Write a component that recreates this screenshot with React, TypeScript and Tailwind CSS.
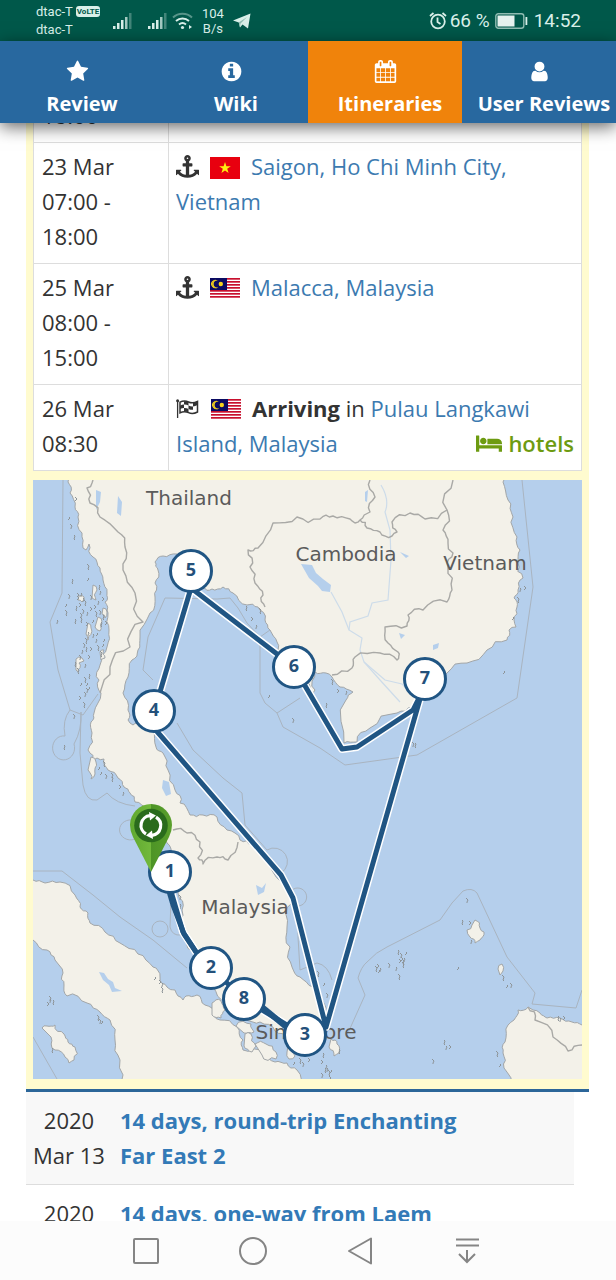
import type { ReactNode } from "react";

type Point = [number, number];

/* ---------- icons ---------- */

function Glyph({ d, box = "0 0 1792 1792", className }: { d: string; box?: string; className: string }) {
  return (
    <svg viewBox={box} className={className} fill="currentColor" aria-hidden="true">
      <path d={d} />
    </svg>
  );
}

const STAR =
  "M1728 647q0 22-26 48l-363 354 86 500q1 7 1 20 0 21-10.5 35.5t-30.5 14.5q-19 0-40-12l-449-236-449 236q-22 12-40 12-21 0-31.5-14.5t-10.5-35.5q0-6 2-20l86-500-364-354q-25-27-25-48 0-37 56-46l502-73 225-455q19-41 49-41t49 41l225 455 502 73q56 9 56 46z";
const INFO =
  "M1152 1376v-160q0-14-9-23t-23-9h-96v-512q0-14-9-23t-23-9h-320q-14 0-23 9t-9 23v160q0 14 9 23t23 9h96v320h-96q-14 0-23 9t-9 23v160q0 14 9 23t23 9h448q14 0 23-9t9-23zm-128-896v-160q0-14-9-23t-23-9h-192q-14 0-23 9t-9 23v160q0 14 9 23t23 9h192q14 0 23-9t9-23zm640 416q0 209-103 385.5t-279.5 279.5-385.5 103-385.5-103-279.5-279.5-103-385.5 103-385.5 279.5-279.5 385.5-103 385.5 103 279.5 279.5 103 385.5z";
const CALENDAR =
  "M192 1664h288v-288h-288v288zM544 1664h320v-288h-320v288zM192 1312h288v-320h-288v320zM544 1312h320v-320h-320v320zM192 928h288v-288h-288v288zM928 1664h320v-288h-320v288zM544 928h320v-288h-320v288zM1312 1664h288v-288h-288v288zM928 1312h320v-320h-320v320zM576 448v-288q0-13-9.5-22.5t-22.5-9.5h-64q-13 0-22.5 9.5t-9.5 22.5v288q0 13 9.5 22.5t22.5 9.5h64q13 0 22.5-9.5t9.5-22.5zM1312 1312h288v-320h-288v320zM928 928h320v-288h-320v288zM1312 928h288v-288h-288v288zM1344 448v-288q0-13-9.5-22.5t-22.5-9.5h-64q-13 0-22.5 9.5t-9.5 22.5v288q0 13 9.5 22.5t22.5 9.5h64q13 0 22.5-9.5t9.5-22.5zM1728 384v1280q0 52-38 90t-90 38h-1408q-52 0-90-38t-38-90v-1280q0-52 38-90t90-38h128v-96q0-66 47-113t113-47h64q66 0 113 47t47 113v96h384v-96q0-66 47-113t113-47h64q66 0 113 47t47 113v96h128q52 0 90 38t38 90z";
const USER =
  "M1536 1399q0 109-62.5 187t-150.5 78h-854q-88 0-150.5-78t-62.5-187q0-85 8.5-160.5t31.5-152 58.5-131 94-89 134.5-34.5q131 128 313 128t313-128q76 0 134.5 34.5t94 89 58.5 131 31.5 152 8.5 160.5zm-256-887q0 159-112.5 271.5t-271.5 112.5-271.5-112.5-112.5-271.5 112.5-271.5 271.5-112.5 271.5 112.5 112.5 271.5z";
const ANCHOR =
  "M960 256q0-26-19-45t-45-19-45 19-19 45 19 45 45 19 45-19 19-45zm832 928v352q0 22-20 30-8 2-12 2-12 0-23-9l-93-93q-119 143-318.5 226.5t-429.5 83.5-429.5-83.5-318.5-226.5l-93 93q-9 9-23 9-4 0-12-2-20-8-20-30v-352q0-14 9-23t23-9h352q22 0 30 20 8 19-7 35l-100 100q67 91 189.5 153.5t271.5 82.5v-647h-192q-26 0-45-19t-19-45v-128q0-26 19-45t45-19h192v-163q-58-34-93-92.5t-35-128.5q0-106 75-181t181-75 181 75 75 181q0 70-35 128.5t-93 92.5v163h192q26 0 45 19t19 45v128q0 26-19 45t-45 19h-192v647q149-20 271.5-82.5t189.5-153.5l-100-100q-15-16-7-35 8-20 30-20h352q14 0 23 9t9 23z";
const BED =
  "M256 1024h1728q26 0 45 19t19 45v448h-256v-256h-1536v256h-256v-1216q0-26 19-45t45-19h128q26 0 45 19t19 45v704zm576-320q0-106-75-181t-181-75-181 75-75 181 75 181 181 75 181-75 75-181zm1216 256v-64q0-159-112.5-271.5t-271.5-112.5h-704q-26 0-45 19t-19 45v384h1152z";

function AnchorIcon() {
  return <Glyph d={ANCHOR} className="mr-[11px] inline-block size-[23px] align-[-3px] text-[#333]" />;
}

function CheckeredFlagIcon() {
  return (
    <svg viewBox="0 0 23 19" className="mr-[12px] inline-block h-[19px] w-[23px] align-[-1px] text-[#333]" aria-hidden="true">
      <circle cx="1.600" cy="1.800" r="1.500" fill="currentColor" />
      <path d="M1.600 2v17" stroke="currentColor" strokeWidth="1.300" />
      <path d="M4 3.200c3-1.600 5.500-1.600 8.500-.2s5.500 1.200 9-.6v10.600c-3.500 1.800-6 2-9 .6s-5.500-1.400-8.500.2z" fill="#fff" stroke="currentColor" strokeWidth="1.500" />
      <path
        fill="currentColor"
        d="M8 2.200c1.700-.1 3 .3 4.500 1v3.400c-1.500-.8-2.800-1.100-4.500-1zM17 4c1.600 0 3-.6 4.500-1.400v3.500c-1.500.8-2.900 1.400-4.500 1.400zM12.500 6.600c1.500.8 3 1 4.500.9v3.300c-1.500.1-3-.2-4.500-.9zM4 6.700c1.300-.7 2.600-1.100 4-1.100V9c-1.400.1-2.700.5-4 1.100zM8 9c1.700-.1 3 .2 4.500.9v3.500c-1.500-.7-2.800-1-4.500-1z"
      />
    </svg>
  );
}

function VietnamFlag() {
  return (
    <svg viewBox="0 0 30 22" className="mr-[11px] inline-block h-[22px] w-[30px] align-[-4px]" aria-label="Vietnam flag">
      <rect width="30" height="22" fill="#e8000f" />
      <path fill="#ffee10" d="M15 5l1.400 4.200h4.400l-3.600 2.600 1.400 4.200-3.600-2.600-3.600 2.600 1.400-4.200-3.600-2.600h4.400z" />
    </svg>
  );
}

function MalaysiaFlag() {
  return (
    <svg viewBox="0 0 30 21" className="mr-[11px] inline-block h-[21px] w-[30px] align-[-3px]" aria-label="Malaysia flag">
      <rect width="30" height="21" fill="#fff" />
      {[0, 3, 6, 9, 12, 15, 18].map((y) => (
        <rect key={y} y={y} width="30" height="1.700" fill="#c8102e" />
      ))}
      <rect width="17" height="12" fill="#0a0a62" />
      <path d="M7.500 2.600a3.700 3.700 0 1 0 0 6.800a4.100 4.100 0 1 1 0-6.800z" fill="#f5d21c" />
      <path d="M6.800 2.200a4 4 0 1 0 1.600 7.200a3.600 3.600 0 1 1 0-6.800z" fill="#f5d21c" />
      <circle cx="10.800" cy="6" r="2.200" fill="#f5d21c" />
    </svg>
  );
}

/* ---------- system bars ---------- */

function Signal() {
  return (
    <svg viewBox="0 0 19 18" className="h-[18px] w-[19px]" fill="#d9efe9" aria-hidden="true">
      <rect x="0" y="14" width="2.500" height="3" />
      <rect x="4" y="11" width="2.500" height="6" />
      <rect x="8" y="8" width="2.500" height="9" />
      <rect x="12" y="5" width="2.500" height="12" opacity=".75" />
      <rect x="16" y="1" width="2.500" height="16" opacity=".3" />
    </svg>
  );
}

function StatusBar() {
  return (
    <header className="flex h-[41px] shrink-0 items-center justify-between bg-[#00584a] pr-[35px] pl-[36px] font-['Roboto',sans-serif] text-[#d9efe9]">
      <div className="flex items-center">
        <div className="w-[77px] text-[13px] leading-[18px]">
          <div className="flex items-center gap-[3px]">
            dtac-T
            <span className="rounded-[3px] bg-[#d9efe9] px-px text-[8px] leading-[11px] font-bold text-[#00584a]">VoLTE</span>
          </div>
          <div>dtac-T</div>
        </div>
        <div className="flex items-center gap-4">
          <Signal />
          <Signal />
        </div>
        <svg viewBox="0 0 22 18" className="ml-[5px] h-[18px] w-[22px]" fill="none" strokeWidth="2" aria-hidden="true">
          <path d="M1 5.500a14 14 0 0 1 19 0" stroke="#d9efe9" opacity=".4" />
          <path d="M4 9a10 10 0 0 1 13 0" stroke="#d9efe9" />
          <path d="M7 12.500a5.500 5.500 0 0 1 7 0" stroke="#d9efe9" />
          <circle cx="10.500" cy="15.500" r="1.600" fill="#d9efe9" />
          <path d="M17 13v4l3-2z" fill="#d9efe9" />
        </svg>
        <div className="ml-2 text-center text-[13px] leading-[15px]">
          104
          <br />
          B/s
        </div>
        <svg viewBox="0 0 18 16" className="ml-[9px] h-4 w-[18px]" fill="#d9efe9" aria-hidden="true">
          <path d="M0 7.500 17.500.500 15 15.500 9.500 11.500 7 14.500 5.800 9.500z" />
          <path d="M5.800 9.500 14 4 7.500 10.500 7 14.500z" fill="#8fbcb2" />
        </svg>
      </div>
      <div className="flex items-center text-[19px] leading-6">
        <svg viewBox="0 0 18 18" className="mr-[3px] size-[18px]" fill="none" stroke="#d9efe9" strokeWidth="1.800" aria-hidden="true">
          <circle cx="9" cy="9.500" r="6.800" />
          <path d="M8.500 5.500v4.500l3 2M1 4l3.500-3M17 4l-3.500-3" />
        </svg>
        66 %
        <svg viewBox="0 0 33 16" className="mr-[6px] ml-[5px] h-4 w-[33px]" aria-hidden="true">
          <rect x=".8" y=".8" width="28" height="14.400" rx="2.500" fill="none" stroke="#8fbcb2" strokeWidth="1.400" />
          <rect x="2.500" y="2.500" width="17" height="11" fill="#e6f2ef" />
          <rect x="30.500" y="4" width="1.800" height="8" fill="#d9efe9" />
        </svg>
        14:52
      </div>
    </header>
  );
}

const TABS = [
  { label: "Review", icon: STAR, active: false },
  { label: "Wiki", icon: INFO, active: false },
  { label: "Itineraries", icon: CALENDAR, active: true },
  { label: "User Reviews", icon: USER, active: false },
];

function TabBar() {
  return (
    <nav className="relative z-10 grid h-[82px] shrink-0 grid-cols-4 bg-[#28689f] font-bold text-white shadow-[0_4px_16px_rgba(0,0,0,0.6)]">
      {TABS.map((tab) => (
        <a
          key={tab.label}
          href="#"
          className={`flex flex-col items-center gap-[7px] pt-[19px] text-[20px] leading-[28px] whitespace-nowrap ${tab.active ? "bg-[#f0830b]" : ""}`}
        >
          <Glyph d={tab.icon} className="size-[23px]" />
          <span className="pl-[10px]">{tab.label}</span>
        </a>
      ))}
    </nav>
  );
}

function SystemNav() {
  const button = "flex size-9 items-center justify-center";
  const svg = "size-7 fill-none stroke-[#858585] stroke-2";
  return (
    <footer className="flex h-[59px] shrink-0 items-center justify-center gap-[71px] bg-[#fcfcfc] pr-[3px]">
      <button className={button} aria-label="Recent apps">
        <svg viewBox="0 0 28 28" className={svg}><rect x="2" y="2" width="24" height="24" rx="1" /></svg>
      </button>
      <button className={button} aria-label="Home">
        <svg viewBox="0 0 28 28" className={svg}><circle cx="14" cy="14" r="13" /></svg>
      </button>
      <button className={button} aria-label="Back">
        <svg viewBox="0 0 28 28" className={svg} strokeLinejoin="round"><path d="M25 1.500v25L3 14z" /></svg>
      </button>
      <button className={button} aria-label="Hide bar">
        <svg viewBox="0 0 28 28" className={svg}><path d="M3 2.500h23M3 8.500h23M14 13v12M6 17l8 8 8-8" /></svg>
      </button>
    </footer>
  );
}

/* ---------- map ---------- */

/* Splits every segment and nudges the new points sideways, so that a coarse outline reads as a natural coast. */
function coast(points: Point[], amount: number, closed = false): string {
  let seed = points.length * 7 + Math.round(points[0][0]);
  const next = () => {
    seed = (seed * 16807) % 2147483647;
    return seed / 2147483647 - 0.5;
  };
  let line = points;
  for (let pass = 0; pass < 2; pass++) {
    const out: Point[] = [];
    line.forEach((p, i) => {
      out.push(p);
      const q = line[i + 1];
      if (!q) return;
      const len = Math.hypot(q[0] - p[0], q[1] - p[1]);
      if (len < 4 || len > 60) return;
      const shift = next() * len * amount;
      out.push([
        (p[0] + q[0]) / 2 - ((q[1] - p[1]) / len) * shift,
        (p[1] + q[1]) / 2 + ((q[0] - p[0]) / len) * shift,
      ]);
    });
    line = out;
  }
  return "M" + line.map(([x, y]) => `${x.toFixed(1)} ${y.toFixed(1)}`).join("L") + (closed ? "Z" : "");
}

const MAINLAND: Point[] = [
  [68, 470], [68, 482], [70, 493], [75, 507], [78, 517], [82, 533], [83, 548], [86, 550], [89, 544], [93, 557], [100, 568], [103, 580], [107, 593], [105, 602],
  [108, 613], [109, 630], [107, 647], [100, 665], [99, 680], [101, 693], [94, 713], [91, 722], [92, 733], [88, 750], [93, 763], [97, 758], [104, 759], [108, 770], [118, 778],
  [124, 787], [130, 793], [135, 802], [147, 810], [155, 822], [160, 832], [167, 843], [171, 854], [176, 872], [178, 893], [182, 910], [184, 930], [193, 952], [213, 987], [227, 1000],
  [233, 1015], [246, 1020], [260, 1022], [275, 1031], [287, 1040], [300, 1051], [312, 1046], [324, 1036], [326, 1025], [325, 1012], [320, 998], [313, 987], [300, 977], [292, 967], [290, 947],
  [287, 927], [292, 903], [283, 883], [263, 857], [252, 845], [240, 840], [227, 830], [217, 817], [203, 815], [190, 815], [180, 803], [175, 790], [168, 770], [163, 753],
  [156, 747], [153, 730], [143, 723], [133, 725], [128, 720], [128, 710], [123, 693], [128, 677], [132, 660], [138, 650], [140, 637], [150, 613], [155, 597], [155, 583],
  [158, 570], [155, 562], [163, 556], [177, 554], [185, 560], [190, 588], [202, 588], [212, 589], [223, 587], [233, 593], [247, 605], [258, 607], [265, 620], [270, 630],
  [277, 642], [280, 657], [292, 668], [303, 678], [310, 687], [313, 693], [315, 690], [315, 672], [326, 673], [332, 677], [340, 687], [353, 692], [346, 700], [344, 743],
  [357, 742], [370, 728], [397, 713], [413, 707], [424, 690], [447, 673], [467, 663], [487, 650], [507, 640], [509, 630], [516, 627], [514, 620], [517, 607], [514, 598],
  [518, 590], [523, 578], [518, 563], [520, 550], [517, 537], [513, 517], [508, 500], [503, 482], [503, 470],
];
const SUMATRA: Point[] = [
  [20, 880], [33, 880], [45, 883], [60, 882], [75, 895], [80, 907], [88, 913], [90, 923], [105, 932], [120, 943], [138, 954], [153, 967], [160, 977], [167, 987], [175, 990], [183, 1000],
  [186, 996], [197, 995], [205, 1005], [212, 1008], [220, 1020], [237, 1027], [243, 1040], [243, 1050], [263, 1053], [275, 1062], [287, 1063], [297, 1070], [303, 1090],
  [123, 1090], [120, 1060], [115, 1040], [110, 1020], [100, 1012], [87, 1003], [67, 996], [64, 985], [63, 973], [55, 960], [47, 950], [33, 940], [20, 938],
];
const BORNEO: Point[] = [
  [528, 1007], [518, 1010], [514, 1020], [508, 1025], [505, 1042], [503, 1053], [504, 1068], [512, 1090], [600, 1090], [600, 1026], [582, 1025], [572, 1022], [560, 1018], [547, 1018], [540, 1013], [533, 1010],
];
const ISLANDS: Point[][] = [
  [[42, 1028], [47, 1026], [55, 1025], [64, 1034], [68, 1042], [75, 1047], [74, 1060], [69, 1063], [65, 1057], [55, 1050], [51, 1037]],
  [[475, 920], [480, 928], [484, 932], [480, 940], [475, 943], [470, 937], [467, 930], [472, 925]],
  [[212, 1003], [221, 1001], [225, 1010], [221, 1018], [212, 1015]],
  [[236, 1026], [251, 1024], [254, 1032], [244, 1033]],
  [[245, 1034], [251, 1034], [256, 1046], [252, 1052], [244, 1046]],
  [[255, 1044], [266, 1044], [276, 1052], [276, 1059], [262, 1055]],
  [[288, 1046], [292, 1047], [295, 1056], [289, 1059], [287, 1052]],
  [[331, 1039], [337, 1044], [339, 1053], [334, 1056], [329, 1047]],
  [[91, 757], [96, 762], [95, 774], [91, 779], [88, 770]],
  [[93, 585], [97, 590], [96, 600], [92, 598]],
  [[98, 617], [102, 622], [100, 631], [95, 627]],
  [[79, 596], [84, 597], [82, 602], [78, 600]],
  [[88, 623], [91, 628], [88, 640], [86, 634]],
  [[76, 659], [82, 658], [84, 661], [79, 663], [78, 672], [76, 670]],
  [[103, 608], [107, 612], [105, 618], [102, 614]],
  [[100, 652], [104, 650], [105, 658], [101, 660]],
  [[498, 969], [502, 964], [503, 971], [500, 975]],
];
const ISLETS: Point[] = [
  [70, 518], [71, 526], [75, 538], [76, 498], [58, 622], [66, 613], [67, 605], [69, 596], [73, 582], [80, 604], [84, 600], [88, 567], [89, 579],
  [83, 611], [76, 622], [87, 623], [89, 634], [86, 641], [94, 621], [100, 612], [104, 618], [91, 648], [83, 652], [78, 671], [82, 684], [87, 690],
  [90, 677], [80, 697], [97, 641], [101, 654], [104, 645], [74, 716], [65, 748], [95, 606], [101, 593], [84, 705], [88, 684], [81, 615], [77, 609],
  [78, 594], [82, 595], [85, 603], [79, 598], [91, 597], [100, 588], [103, 598], [99, 603], [96, 614], [98, 634], [84, 645], [87, 650], [89, 656], [86, 666],
  [85, 680], [90, 688], [85, 694], [102, 625], [106, 622], [94, 636], [98, 648], [105, 640], [80, 657], [76, 665], [91, 608], [88, 614], [81, 620],
  [100, 768], [106, 776], [113, 780], [120, 786], [124, 794], [104, 764], [102, 773], [112, 775], [247, 609], [252, 618], [257, 627], [260, 611], [270, 696], [293, 720], [327, 706], [338, 690],
  [347, 693], [332, 682], [505, 672], [413, 744], [416, 746], [525, 587], [521, 590], [518, 600], [514, 618], [50, 998], [54, 1003], [48, 1003], [51, 1001], [98, 1018], [103, 1022], [100, 1021],
  [53, 1051], [160, 981], [163, 985], [162, 990], [156, 978], [180, 897], [181, 907], [378, 965], [381, 970], [376, 969], [380, 971], [389, 965], [399, 953], [402, 958], [405, 960],
  [403, 965], [407, 953], [401, 955], [404, 963], [400, 960], [397, 969], [399, 977], [459, 968], [467, 900], [463, 923], [470, 922], [472, 942], [503, 978], [508, 986], [511, 985],
  [445, 1043], [450, 1046], [447, 1048], [497, 1054], [501, 1065], [433, 1061], [559, 1019], [564, 1017], [561, 1020], [318, 974], [325, 984], [327, 995],
  [324, 1056], [322, 1061], [327, 1067], [329, 1073], [332, 1071], [322, 1075], [326, 1071], [330, 1077], [328, 1070], [300, 1061], [295, 1063], [303, 1064], [340, 1052], [309, 1059],
];
const BORDERS: Point[][] = [
  [[93, 480], [92, 483], [87, 488], [90, 503], [100, 517], [118, 532], [125, 547], [123, 570], [135, 593], [143, 622], [130, 647], [110, 667], [100, 693]],
  [[265, 607], [263, 595], [255, 583], [250, 567], [248, 550], [258, 548], [273, 523], [297, 517], [320, 519], [333, 516], [350, 519], [355, 523], [360, 520], [370, 512], [375, 497], [370, 480]],
  [[360, 520], [367, 528], [380, 532], [392, 536], [397, 532], [392, 522], [410, 513], [425, 519], [447, 510], [453, 480]],
  [[447, 510], [443, 530], [448, 543], [453, 553], [448, 567], [452, 590], [447, 602], [423, 610], [408, 615], [407, 626], [385, 627], [388, 643], [398, 652], [397, 660], [380, 653], [355, 657], [352, 668], [332, 675]],
  [[173, 830], [187, 833], [200, 842], [198, 858], [203, 864], [217, 857], [228, 860], [238, 842]],
  [[528, 1007], [535, 1020], [553, 1037], [568, 1051], [582, 1045]],
];
const SEA_LIMITS = [
  "M63 480L62 593L50 622L58 670L70 710L83 715L98 694",
  "M70 710Q62 720 65 736A11 12 0 1 0 74 744Q82 730 81 712L80 753L83 785Q86 802 97 800L107 793Q116 804 135 806",
  "M33 871H62L93 895L120 917L153 940L187 968",
  "M153 680L143 670L148 637L165 598L217 599L230 598L238 608L247 623L260 637V693L265 703L277 713L300 698M260 637L270 630",
  "M277 713L283 727L320 748L345 765L417 755L517 698L533 587L522 480",
  "M177 723L193 750L223 778L242 793L245 825L267 850A13 13 0 1 1 281 873M292 890A9 9 0 1 1 298 906L298 937L300 970L317 963Q328 965 332 980",
  "M348 1033L365 995L358 978Q361 967 367 962Q376 952 387 947L440 920L452 903L463 891Q472 887 477 893L507 957L535 993L532 1004L576 1008L582 990",
  "M33 1037L57 1079M137 838A11 10 0 1 1 132 820M171 900L170 927Q172 936 181 935",
];
const LAKES = [
  "M301 564L312 565L316 573L323 579L331 585L330 592L322 591L318 586L309 578Z",
  "M99 972L104 973L108 979L113 982L115 988L122 991L112 992L109 985L103 980Z",
  "M96 490l5 2-1 10-4 8zM118 496l4 6-1 14-4-3zM163 780l6 2 2 12-5 2-4-8zM256 885l6 3 4-5-2 9-6 3zM399 633l6 2-4 4zM433 645l6-2-1 5-5 2zM400 552l9 4-3 2zM365 492l3-2-1 12-2-1z",
];
const RIVERS = [
  "M381 485Q390 500 385 512L390 530L391 560L388 600L372 603L368 616L350 622L349 630L362 638L360 650L364 662L380 680L400 702",
  "M331 592L342 612L349 630M364 662L385 680L402 684L408 690",
];
const ROUTE =
  "M191 588L154 712M191 588L294 667L342 749L357 747L413 710L422 692L326 1027L293 898L281 875L154 728M170 888L183 932L200 958L211 968L244 999L305 1036";
const PORTS: { n: number; x: number; y: number }[] = [
  { n: 1, x: 170, y: 872 }, { n: 2, x: 211, y: 968 }, { n: 8, x: 244, y: 999 }, { n: 3, x: 305, y: 1035 },
  { n: 4, x: 154, y: 711 }, { n: 5, x: 191, y: 571 }, { n: 6, x: 294, y: 667 }, { n: 7, x: 425, y: 679 },
];
const COUNTRIES = [
  { name: "Thailand", x: 189, y: 505 }, { name: "Cambodia", x: 346, y: 561 }, { name: "Vietnam", x: 485, y: 570 },
  { name: "Malaysia", x: 245, y: 914 }, { name: "Singapore", x: 306, y: 1039 },
];

function RouteMap() {
  return (
    <svg viewBox="33 480 549 599" className="block h-auto w-full" role="img" aria-label="Cruise route map">
      <defs>
        <linearGradient id="pin" x1="0" x2="1">
          <stop offset="0" stopColor="#5fa82f" />
          <stop offset=".5" stopColor="#72b93c" />
          <stop offset=".5" stopColor="#4d9426" />
          <stop offset="1" stopColor="#5a9f2c" />
        </linearGradient>
      </defs>
      <rect x="33" y="480" width="549" height="599" fill="#b5cfec" />
      <g fill="#f3f1e9" stroke="#a2a6a8" strokeWidth="1" strokeLinejoin="round">
        <path d={coast(SUMATRA, 0.4, true)} />
        <path d={coast(MAINLAND, 0.4, true)} />
        <path d={coast(BORNEO, 0.35, true)} />
        {ISLANDS.map((shape, i) => (
          <path key={i} d={coast(shape, 0.5, true)} />
        ))}
      </g>
      <g fill="none" stroke="#8d9498" strokeWidth="1">
        {ISLETS.map(([x, y], i) => (
          <path key={i} d={`M${x - 1} ${y - 1 - (i % 3)}l${1 + (i % 2)} ${1 + (i % 2)}l-1 ${1 + (i % 3)}l${(i % 3) - 1} 1`} />
        ))}
      </g>
      <g fill="none" stroke="#cddcea" strokeWidth="1.200">
        {RIVERS.map((d) => (
          <path key={d} d={d} />
        ))}
      </g>
      <g fill="#b5cfec">
        {LAKES.map((d) => (
          <path key={d} d={d} />
        ))}
      </g>
      <g fill="none" stroke="#a9b4c0" strokeWidth="1" strokeLinejoin="round">
        {SEA_LIMITS.map((d) => (
          <path key={d} d={d} />
        ))}
        <circle cx="160" cy="929" r="8" />
      </g>
      <g fill="none" stroke="#a9a9a6" strokeWidth="1.400" strokeLinejoin="round">
        {BORDERS.map((line, i) => (
          <path key={i} d={coast(line, 0.45)} />
        ))}
      </g>
      <g fill="#5b5b5b" fontSize="20" fontFamily="'DejaVu Sans', sans-serif" textAnchor="middle">
        {COUNTRIES.map((c) => (
          <text key={c.name} x={c.x} y={c.y}>
            {c.name}
          </text>
        ))}
      </g>
      <g fill="none" strokeLinejoin="round">
        <path d={ROUTE} stroke="#fff" strokeWidth="8" />
        <path d={ROUTE} stroke="#205583" strokeWidth="5" />
        <path d="M168 888L173 905L184 934L196 952" stroke="#205583" strokeWidth="5" />
        <path d="M262 1007L290 1030" stroke="#205583" strokeWidth="6" />
      </g>
      <g fontSize="18" fontWeight="700" fontFamily="'Open Sans', 'Noto Sans', sans-serif" textAnchor="middle">
        {PORTS.map((p) => (
          <g key={p.n}>
            <circle cx={p.x} cy={p.y} r="20.500" fill="#fff" stroke="#205583" strokeWidth="3" />
            <text x={p.x} y={p.y + 5} fill="#24507a">
              {p.n}
            </text>
          </g>
        ))}
      </g>
      <path d="M151 872L133 837Q130 831 130 825A21 21 0 0 1 172 825Q172 831 169 837Z" fill="url(#pin)" />
      <circle cx="151" cy="825.500" r="16.800" fill="#2a6b1c" />
      <g fill="none" stroke="#fff" strokeWidth="3.200">
        <path d="M146 834A9.800 9.800 0 0 1 150 815.700M156 817.200A9.800 9.800 0 0 1 152 835.300" />
        <path d="M149 812l7 3.500-6 5zM153 839l-7-3.500 6-5z" fill="#fff" stroke="none" />
      </g>
    </svg>
  );
}

/* ---------- itinerary ---------- */

function Stop({ when, children }: { when: string[]; children: ReactNode }) {
  return (
    <tr>
      <td className="w-[135px] border border-[#ddd] pt-[6px] pr-[7px] pb-[9px] pl-2 align-top">
        {when.map((line) => (
          <div key={line}>{line}</div>
        ))}
      </td>
      <td className="border border-[#ddd] px-[7px] pt-[6px] pb-[9px] align-top">{children}</td>
    </tr>
  );
}

const link = "text-[#3c7ab0]";

function Sailing({ date, title, shaded }: { date: string; title: string; shaded?: boolean }) {
  return (
    <li className={`mr-[15px] flex border-b border-[#ddd] py-[11px] ${shaded ? "bg-[#f8f8f8]" : ""}`}>
      <div className="w-[86px] shrink-0 px-1 text-center">
        2020
        <br />
        {date}
      </div>
      <a href="#" className="ml-2 max-w-[360px] font-bold text-[#337ab7]">
        {title}
      </a>
    </li>
  );
}

export default function App() {
  return (
    <div className="flex h-screen flex-col overflow-hidden bg-white font-['Open_Sans','Noto_Sans',sans-serif] text-[22px] leading-[35px] text-[#333]">
      <StatusBar />
      <TabBar />
      <main className="min-h-0 flex-1 overflow-hidden pr-[27px] pl-[26px]">
        <section className="-mt-[102px] border-b-[3px] border-[#2c6699] bg-[#fffbcf] px-[7px] pb-[10px]">
          <table className="mb-[9px] w-full border-collapse bg-white">
            <tbody>
              <Stop when={["22 Mar", "07:00 -", "18:00"]}>
                <AnchorIcon />
                <VietnamFlag />
              </Stop>
              <Stop when={["23 Mar", "07:00 -", "18:00"]}>
                <AnchorIcon />
                <VietnamFlag />
                <a href="#" className={link}>Saigon, Ho Chi Minh City, Vietnam</a>
              </Stop>
              <Stop when={["25 Mar", "08:00 -", "15:00"]}>
                <AnchorIcon />
                <MalaysiaFlag />
                <a href="#" className={link}>Malacca, Malaysia</a>
              </Stop>
              <Stop when={["26 Mar", "08:30"]}>
                <CheckeredFlagIcon />
                <MalaysiaFlag />
                <strong>Arriving</strong> in <a href="#" className={link}>Pulau Langkawi Island, Malaysia</a>
                <a href="#" className="float-right flex items-center gap-[6px] font-semibold text-[#6d9b11]">
                  <Glyph d={BED} box="0 0 2048 1792" className="h-[23px] w-[26px]" />
                  hotels
                </a>
              </Stop>
            </tbody>
          </table>
          <RouteMap />
        </section>
        <ul>
          <Sailing date="Mar 13" title="14 days, round-trip Enchanting Far East 2" shaded />
          <Sailing date="Mar 27" title="14 days, one-way from Laem Chabang" />
        </ul>
      </main>
      <SystemNav />
    </div>
  );
}
